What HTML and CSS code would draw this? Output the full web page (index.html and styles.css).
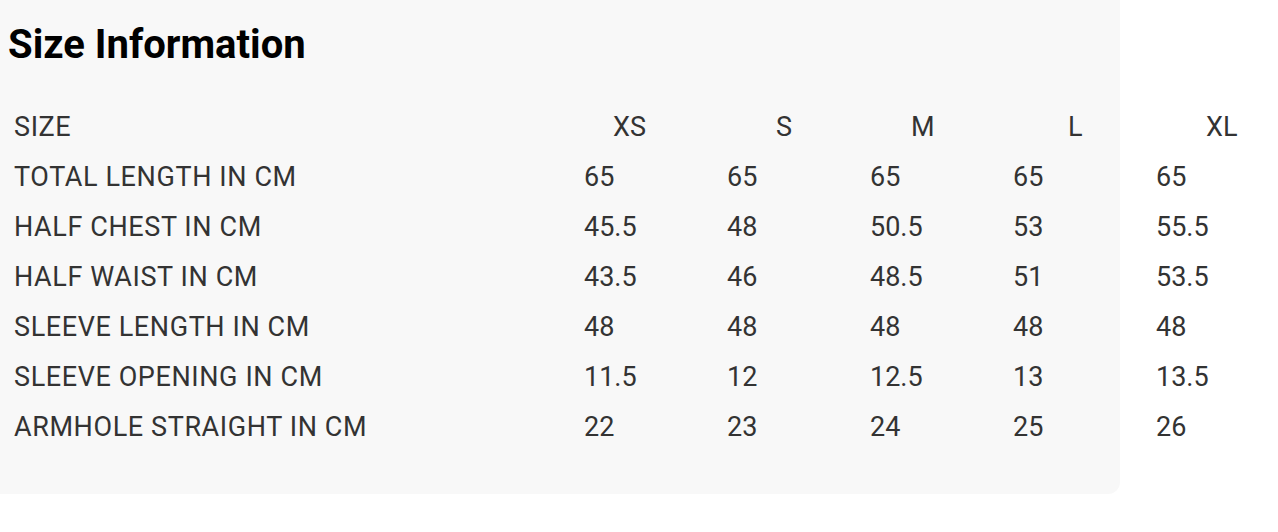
FILE: index.html
```html
<!DOCTYPE html>
<html lang="en">
<head>
<meta charset="utf-8">
<title>Size Information</title>
<link rel="stylesheet" href="styles.css">
</head>
<body>
<section class="panel">
  <h2 class="title">Size Information</h2>
  <div class="size-grid">
    <div class="label">SIZE</div>
    <div class="head h-xs">XS</div>
    <div class="head h-s">S</div>
    <div class="head h-m">M</div>
    <div class="head h-l">L</div>
    <div class="head h-xl">XL</div>

    <div class="label">TOTAL LENGTH IN CM</div>
    <div class="val">65</div><div class="val">65</div><div class="val">65</div><div class="val">65</div><div class="val">65</div>

    <div class="label">HALF CHEST IN CM</div>
    <div class="val">45.5</div><div class="val">48</div><div class="val">50.5</div><div class="val">53</div><div class="val">55.5</div>

    <div class="label">HALF WAIST IN CM</div>
    <div class="val">43.5</div><div class="val">46</div><div class="val">48.5</div><div class="val">51</div><div class="val">53.5</div>

    <div class="label">SLEEVE LENGTH IN CM</div>
    <div class="val">48</div><div class="val">48</div><div class="val">48</div><div class="val">48</div><div class="val">48</div>

    <div class="label">SLEEVE OPENING IN CM</div>
    <div class="val">11.5</div><div class="val">12</div><div class="val">12.5</div><div class="val">13</div><div class="val">13.5</div>

    <div class="label">ARMHOLE STRAIGHT IN CM</div>
    <div class="val">22</div><div class="val">23</div><div class="val">24</div><div class="val">25</div><div class="val">26</div>
  </div>
</section>
</body>
</html>
```

FILE: styles.css
```css
html, body {
  margin: 0;
  padding: 0;
  background: #ffffff;
  overflow: hidden;
}

body {
  font-family: Roboto, "Liberation Sans", Arial, sans-serif;
  color: #333333;
}

.panel {
  width: 1120px;
  box-sizing: border-box;
  background: #f8f8f8;
  border-radius: 0 0 12px 0;
  padding: 21px 0 42px 0;
}

.title {
  margin: 0 0 33px 8px;
  font-size: 40px;
  line-height: 48px;
  font-weight: 700;
  color: #000000;
}

.size-grid {
  display: grid;
  grid-template-columns: 570px 143px 143px 143px 143px 110px;
  grid-auto-rows: 50px;
  align-items: baseline;
  padding-left: 14px;
  font-size: 27px;
  line-height: 50px;
  white-space: nowrap;
}

.label {
  letter-spacing: 0.6px;
}

.h-xs { padding-left: 29px; }
.h-s  { padding-left: 49px; }
.h-m  { padding-left: 41px; }
.h-l  { padding-left: 55px; }
.h-xl { padding-left: 50px; }
```
